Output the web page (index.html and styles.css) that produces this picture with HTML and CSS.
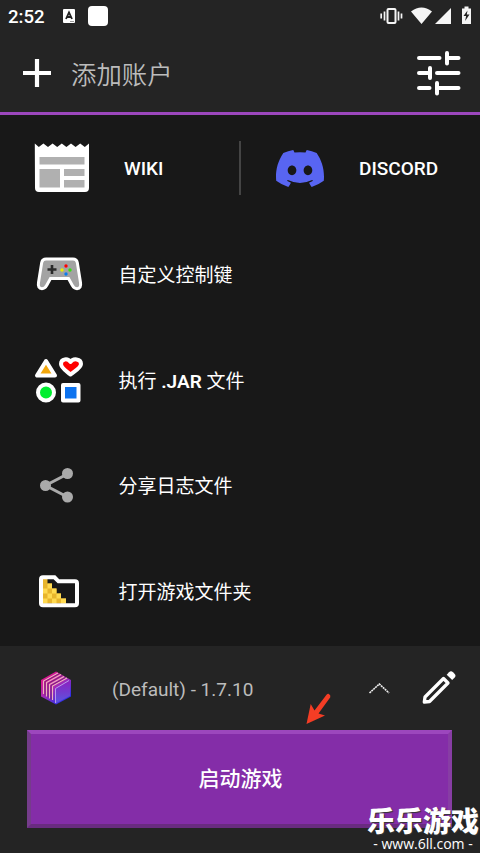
FILE: index.html
```html
<!DOCTYPE html>
<html lang="zh-CN">
<head>
<meta charset="utf-8">
<meta name="viewport" content="width=device-width">
<title>启动器</title>
<link rel="stylesheet" href="styles.css">
</head>
<body>
<div class="screen">
  <header class="top">
    <div class="status">
      <span class="clock">2:52</span>
      <svg class="keyboard" width="12" height="14" viewBox="0 0 12 14"><rect width="12" height="14" rx="1" fill="#fff"/><path d="M3 10L6 3.4 9 10M4 8h4" fill="none" stroke="#222" stroke-width="1.8"/><path d="M7 12.5h4" stroke="#999"/></svg>
      <span class="notice"></span>
      <svg class="signals" width="94" height="20" viewBox="380 6 94 20" fill="#f5f5f5">
        <rect x="387.5" y="9" width="8" height="14" rx="1" fill="none" stroke="#f5f5f5" stroke-width="2"/>
        <path d="M384.5 11.5v9M381.200 13.500v5M398.500 11.500v9M401.500 13.500v5" fill="none" stroke="#f5f5f5" stroke-width="1.700"/>
        <path d="M411 11.500Q421.500 3.500 432 11.500L421.500 24zM451 8v16h-16z"/>
        <path d="M462 8.500h2.500V6.500h4v2h2.500V24h-9z"/>
        <path d="M467.500 10.500l-4 5.500h2.600l-1 5 4.400-6.500h-2.700z" fill="#222"/>
      </svg>
    </div>
    <div class="account">
      <svg class="plus" width="30" height="30" viewBox="0 0 30 30"><path d="M15 1v28M1 15h28" stroke="#fff" stroke-width="4.200"/></svg>
      <span class="account-name">添加账户</span>
      <svg class="tune" width="46" height="46" viewBox="416 50.500 46 46" fill="none" stroke="#fff" stroke-width="4" stroke-linecap="round"><path d="M419 58.500h20.500M447 53.500v10.500M447 58.500h11.500M419 73.500h10.500M430 68.500v10M437 73.500h21.500M419 88.500h10.500M437 83.500v10.500M437 88.500h21.500"/></svg>
    </div>
  </header>

  <main class="menu">
    <div class="split">
      <div class="item wiki">
        <svg width="56" height="50" viewBox="34 143 56 50"><path d="M34.800 143.500l4 3.500 4.600-3.500 4.600 3.500 4.600-3.500 4.600 3.500 4.600-3.500 4.600 3.500 4.600-3.500 4.600 3.500 4.600-3.500 4.600 3.500 4.200-3.500V188q0 4-4 4H39q-4 0-4-4z" fill="#fff"/><path d="M39.500 157h45v7.500h-45zM39.500 169h20.500v18.500h-20.500zM64 169h20.500v7h-20.500zM64 180h20.500v7.500h-20.500z" fill="#b0b0b0"/></svg>
        <span>WIKI</span>
      </div>
      <div class="item discord">
        <svg width="48" height="37" viewBox="0 0 127.140 96.360" preserveAspectRatio="none"><path fill="#5865f2" d="M107.700 8.070A105.150 105.150 0 0 0 81.470 0a72.060 72.060 0 0 0-3.360 6.830 97.680 97.680 0 0 0-29.110 0A72.370 72.370 0 0 0 45.640 0 105.890 105.890 0 0 0 19.390 8.090C2.790 32.650-1.710 56.600.54 80.210a105.730 105.730 0 0 0 32.170 16.150 77.700 77.700 0 0 0 6.890-11.110 68.420 68.420 0 0 1-10.850-5.180c.91-.66 1.800-1.340 2.660-2a75.570 75.570 0 0 0 64.320 0c.87.710 1.760 1.390 2.660 2a68.680 68.680 0 0 1-10.870 5.190 77 77 0 0 0 6.890 11.100 105.250 105.250 0 0 0 32.190-16.140c2.640-27.380-4.510-51.110-18.900-72.150zM42.450 65.690C36.180 65.690 31 60 31 53s5-12.740 11.430-12.740S54 46 53.890 53s-5.050 12.690-11.440 12.690zm42.240 0C78.410 65.690 73.250 60 73.250 53s5-12.740 11.440-12.740S96.230 46 96.120 53s-5.040 12.690-11.430 12.690z"/></svg>
        <span>DISCORD</span>
      </div>
    </div>
    <div class="item">
      <svg class="icon" width="60" height="56" viewBox="30 246 60 56"><path d="M46 259h27q3.500 0 4.300 3.500l3.200 20q1 6-3.500 6.200-3 0-4.500-3l-4-7.200H50.500l-4 7.200q-1.500 3-4.500 3-4.500-.2-3.500-6.200l3.200-20Q42.500 259 46 259z" fill="#a3a3a3" stroke="#fff" stroke-width="3"/><path d="M47.500 269.500h9M52 265v9" stroke="#2b2b2b" stroke-width="2.600"/><circle cx="66" cy="266" r="1.700" fill="#f00"/><circle cx="62" cy="270" r="1.700" fill="#e8ee00"/><circle cx="70" cy="270" r="1.700" fill="#32e010"/><circle cx="66" cy="274" r="1.700" fill="#087cf0"/></svg>
      <span class="label">自定义控制键</span>
    </div>
    <div class="item">
      <svg class="icon" width="60" height="56" viewBox="30 352 60 56" stroke="#fff" stroke-width="4" stroke-linejoin="round"><path d="M46 361l-9 14.500h18z" fill="#f3a70b"/><path d="M70.500 374.500c-4-3.500-9.500-6.500-9.500-10.500 0-5.500 7-6 9.500-2 2.500-4 10.500-3.500 10.500 2 0 4-6.500 7-10.500 10.500z" fill="#f00"/><circle cx="46" cy="392.500" r="8" fill="#00ee30"/><path d="M63 385h15.500v15.500H63z" fill="#0d73ef"/></svg>
      <span class="label">执行 <b>.JAR</b> 文件</span>
    </div>
    <div class="item">
      <svg class="icon" width="60" height="56" viewBox="30 458.500 60 56" fill="#aaa"><path d="M67.500 473.500l-22 11.500 22 11.500" fill="none" stroke="#aaa" stroke-width="3"/><circle cx="67.500" cy="473" r="5.500"/><circle cx="45.500" cy="485" r="5.500"/><circle cx="67.500" cy="496.500" r="5.500"/></svg>
      <span class="label low">分享日志文件</span>
    </div>
    <div class="item">
      <svg class="icon" width="60" height="56" viewBox="30 564.500 60 56"><path d="M43 578h4.500v5H52v5h4.500v5H61v5h5v5H43z" fill="#e8b52c"/><path d="M47.500 583H52v5h-4.500zM43 588h4.500v5H43zM52 588h4.500v5H52zM47.500 593H52v5h-4.500zM56.500 593H61v5h-4.500zM43 598h4.500v5H43zM52 598h4.500v5H52zM61 598h5v5h-5z" fill="#ffda51"/><path d="M43 576.800h11.500l4 4H75q2 0 2 2v20q0 2-2 2H43q-2 0-2-2v-24q0-2 2-2z" fill="none" stroke="#fff" stroke-width="4"/></svg>
      <span class="label low">打开游戏文件夹</span>
    </div>
  </main>

  <footer class="bottom">
    <div class="version">
      <svg class="cube" width="32" height="34" viewBox="40 671 32 34">
        <defs><linearGradient id="cubeFill" x1="0" y1="0" x2=".7" y2="1"><stop stop-color="#f0087c"/><stop offset=".5" stop-color="#b02ab0"/><stop offset="1" stop-color="#2030f0"/></linearGradient><linearGradient id="faceFill" x1="0" y1="0" x2="0" y2="1"><stop stop-color="#8d20c0"/><stop offset="1" stop-color="#5957e0"/></linearGradient></defs>
        <path d="M56 671.500l15 8.500v16.500l-15 8-15-8V680z" fill="url(#cubeFill)"/>
        <path d="M43.500 694v-13L58 673M46.500 696.500v-14l14.500-8M49.500 698.500v-14l14.500-8M52.500 700v-14l14.500-8" fill="none" stroke="#efb3bd" stroke-width="1.100"/>
        <path d="M45 695.500v-14l14.500-8M48 697.500v-14l14.500-8M51 699.500v-14l14.500-8" fill="none" stroke="#71206f" stroke-width=".8"/>
        <path d="M55.500 688.500l14.500-8v15.500l-14.500 7.500z" fill="url(#faceFill)"/><path d="M55.500 703v-14.500l13.500-8" fill="none" stroke="#c0a5ef" stroke-width=".9"/>
      </svg>
      <span class="version-name">(Default) - 1.7.10</span>
      <svg class="chevron" width="22" height="14" viewBox="368 681 22 14"><path d="M369.500 693l9.800-9 9.700 9" fill="none" stroke="#eee" stroke-width="1.600" stroke-dasharray="2 .6"/></svg>
      <svg class="pencil" width="36" height="36" viewBox="421 671 36 36"><path d="M424.300 703l.7-5 18.500-18.500 4.500 4.500-18.500 18.500z" fill="none" stroke="#fff" stroke-width="3.300" stroke-linejoin="round"/><path d="M446.700 675.700l2.300-2.500q2-2 4 0l1.500 1.500q2 2 0 4l-2.300 2.300z" fill="#fff"/></svg>
    </div>
    <button class="launch">启动游戏</button>
    <svg class="arrow" width="28" height="34" viewBox="304 692 28 34"><path d="M328.500 693.800q2.500 1.300 1.800 3.500L318.500 713.500l6.500 2-18.500 8.500 4.200-20 3.800 6.500 12-15.700q1-1.200 2-1z" fill="#f43d25"/></svg>
    <div class="watermark"><strong>乐乐游戏</strong><span>- www.6ll.com -</span></div>
  </footer>
</div>
</body>
</html>
```
FILE: styles.css
```css
* { box-sizing: border-box; }
body { margin: 0; background: #181818; }
.screen {
  position: relative;
  display: flex;
  flex-direction: column;
  width: 480px;
  height: 853px;
  overflow: hidden;
  background: #181818;
  color: #fff;
  font-family: Roboto, "Noto Sans CJK SC", sans-serif;
}
svg { display: block; flex: none; }
.top { height: 115px; background: #242424; border-bottom: 3px solid #9c47bd; }
.status { display: flex; align-items: center; height: 32px; padding: 0 6px 0 8px; }
.clock { width: 55px; font-size: 18.600px; font-weight: 500; line-height: 32px; padding-top: 1px; }
.notice { width: 20px; height: 20px; margin-left: 13px; border-radius: 4px; background: #fff; }
.signals { margin-left: auto; }
.account { display: flex; align-items: center; height: 82px; padding: 0 18px 0 22px; }
.account-name { margin-left: 19px; padding-bottom: 1px; color: #bcbcbc; font-size: 25.400px; font-weight: 350; }
.tune { margin-left: auto; }

.menu { display: grid; grid-template-rows: repeat(5, 1fr); height: 531px; }
.split { display: grid; grid-template-columns: 241px 239px; align-items: center; }
.item { display: flex; align-items: center; font-size: 19px; font-weight: 400; white-space: pre; }
.item .icon { margin: 0 28.500px 0 30px; }
.label { padding-bottom: 2px; }
.label.low { padding-bottom: 4px; }
.label b { font-weight: 600; }
.wiki { height: 54px; padding-left: 34px; gap: 34px; border-right: 2px solid #444; font-weight: 500; }
.discord { padding-left: 35px; gap: 35px; font-weight: 500; }

.bottom { position: relative; height: 207px; background: #242424; }
.version { display: flex; align-items: center; height: 84px; padding: 0 23px 0 40px; }
.version-name { margin-left: 40px; padding-top: 2px; color: #bcbcbc; font-size: 19px; }
.chevron { margin-left: auto; }
.pencil { margin-left: 31px; }
.launch {
  display: block;
  width: 425px;
  height: 98px;
  margin: 0 0 0 27px;
  padding: 0 0 4px 2px;
  border: solid;
  border-width: 4px;
  border-color: #9c47bd #873da4 #692b80 #753c8b;
  background: #842da8;
  color: #fff;
  font: 500 21px Roboto, "Noto Sans CJK SC", sans-serif;
}
.arrow { position: absolute; left: 304px; top: 46px; }
.watermark {
  position: absolute;
  right: 0;
  bottom: 0;
  display: flex;
  flex-direction: column;
  align-items: center;
  width: 114px;
  height: 50px;
  padding-top: 4px;
  text-shadow: 1px 1px 1px #333;
}
.watermark strong { font: 900 28px/26px "Noto Sans CJK SC", sans-serif; white-space: nowrap; }
.watermark span { margin-top: 3px; font: 14px/16px "Open Sans", sans-serif; white-space: nowrap; }
```
